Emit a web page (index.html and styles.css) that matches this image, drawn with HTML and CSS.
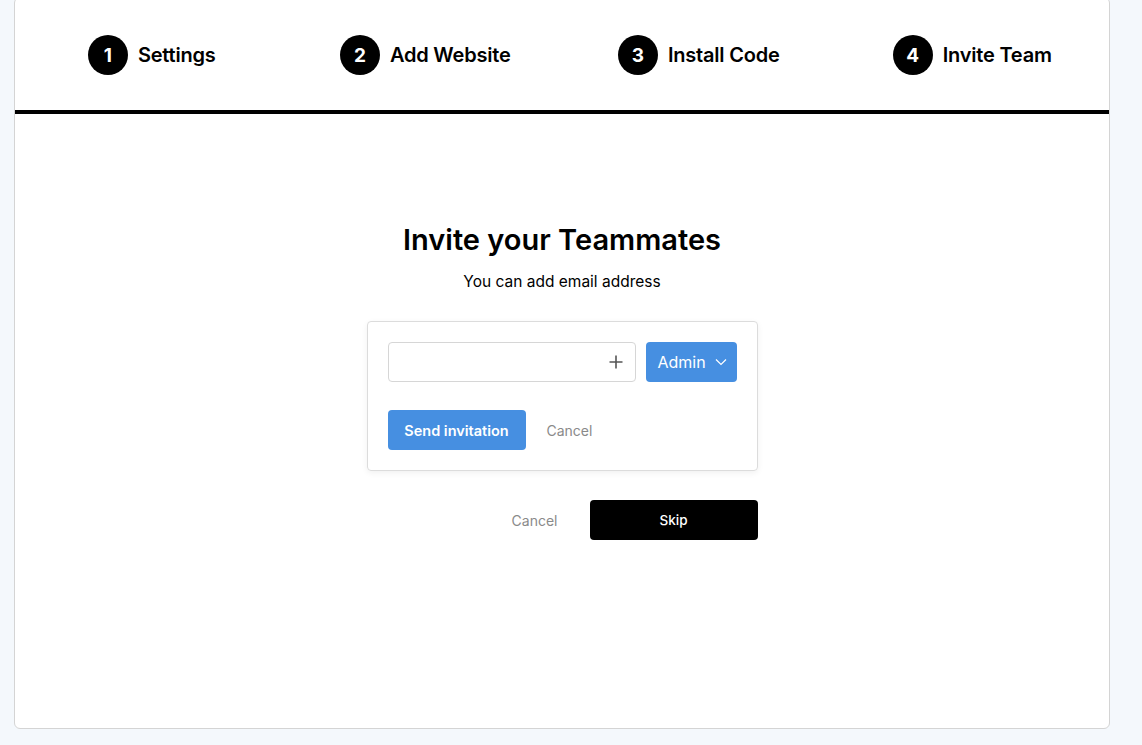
FILE: index.html
```html
<!DOCTYPE html>
<html lang="en">
<head>
<meta charset="UTF-8" />
<meta name="viewport" content="width=device-width, initial-scale=1" />
<title>Onboarding - Invite Team</title>
<link rel="stylesheet" href="styles.css">
</head>
<body>

<div class="card">
  <div class="steps">
    <div class="step"><span class="num">1</span><span class="label">Settings</span></div>
    <div class="step"><span class="num">2</span><span class="label">Add Website</span></div>
    <div class="step"><span class="num">3</span><span class="label">Install Code</span></div>
    <div class="step"><span class="num">4</span><span class="label">Invite Team</span></div>
  </div>

  <div class="content">
    <h1 class="title">Invite your Teammates</h1>
    <p class="subtitle">You can add email address</p>

    <div class="invite-box">
      <div class="invite-row">
        <div class="email-field">
          <input type="text" class="email-input" />
          <svg class="plus" width="16" height="16" viewBox="0 0 16 16">
            <path d="M8 1.5v13M1.5 8h13" stroke="#555" stroke-width="1.6" fill="none" />
          </svg>
        </div>
        <button class="role-btn">Admin
          <svg width="12" height="8" viewBox="0 0 12 8">
            <path d="M1 1.5l5 5 5-5" stroke="#fff" stroke-width="1.2" fill="none" />
          </svg>
        </button>
      </div>
      <div class="invite-actions">
        <button class="send-btn">Send invitation</button>
        <button class="link-btn">Cancel</button>
      </div>
    </div>

    <div class="footer-actions">
      <button class="link-btn">Cancel</button>
      <button class="skip-btn">Skip</button>
    </div>
  </div>
</div>

</body>
</html>
```

FILE: styles.css
```css
* {
  box-sizing: border-box;
}
body {
  margin: 0;
  background: #f4f8fc;
  font-family: Inter, "Open Sans", sans-serif;
  color: #000;
}
.card {
  margin: -3px 32px 16px 14px;
  height: 732px;
  background: #fff;
  border: 1px solid #d4d4d4;
  border-radius: 6px;
}
.steps {
  display: grid;
  grid-template-columns: repeat(4, 1fr);
  height: 116px;
  padding-top: 2px;
  border-bottom: 4px solid #000;
}
.step {
  display: flex;
  align-items: center;
  justify-content: center;
  gap: 10px;
}
.num {
  width: 40px;
  height: 40px;
  border-radius: 50%;
  background: #000;
  color: #fff;
  display: flex;
  align-items: center;
  justify-content: center;
  font-size: 19px;
  font-weight: 700;
}
.label {
  font-size: 20px;
  font-weight: 600;
  letter-spacing: -0.2px;
}
.content {
  display: flex;
  flex-direction: column;
  align-items: center;
  padding-top: 107px;
}
.title {
  margin: 0;
  font-size: 29px;
  font-weight: 600;
  line-height: 38px;
  letter-spacing: 0;
}
.subtitle {
  margin: 13px 0 0;
  font-size: 15.5px;
  line-height: 20px;
}
.invite-box {
  margin-top: 29px;
  width: 391px;
  padding: 20px;
  border: 1px solid #dcdcdc;
  border-radius: 4px;
  box-shadow: 0 2px 6px rgba(0,0,0,0.06);
}
.invite-row {
  display: flex;
  gap: 10px;
}
.email-field {
  flex: 1;
  position: relative;
}
.email-input {
  width: 100%;
  height: 40px;
  border: 1px solid #d6d6d6;
  border-radius: 4px;
  padding: 0 36px 0 12px;
  font: inherit;
}
.plus {
  position: absolute;
  right: 12px;
  top: 12px;
}
.role-btn {
  width: 91px;
  height: 40px;
  border: none;
  border-radius: 4px;
  background: #468fe1;
  color: #fff;
  font-family: inherit;
  font-size: 16px;
  display: flex;
  align-items: center;
  justify-content: center;
  gap: 9px;
  padding: 0 0 0 2px;
}
.invite-actions {
  display: flex;
  align-items: center;
  gap: 21px;
  margin-top: 28px;
}
.send-btn {
  width: 138px;
  height: 40px;
  border: none;
  border-radius: 4px;
  background: #468fe1;
  color: #fff;
  font-family: inherit;
  font-size: 14.5px;
  font-weight: 600;
}
.link-btn {
  border: none;
  background: none;
  padding: 0;
  color: #8a8a8a;
  font-family: inherit;
  font-size: 14px;
}
.footer-actions {
  width: 391px;
  margin-top: 29px;
  display: flex;
  justify-content: flex-end;
  align-items: center;
  gap: 32px;
}
.skip-btn {
  width: 168px;
  height: 40px;
  border: none;
  border-radius: 4px;
  background: #000;
  color: #fff;
  font-family: inherit;
  font-size: 13.5px;
  font-weight: 500;
}
```
